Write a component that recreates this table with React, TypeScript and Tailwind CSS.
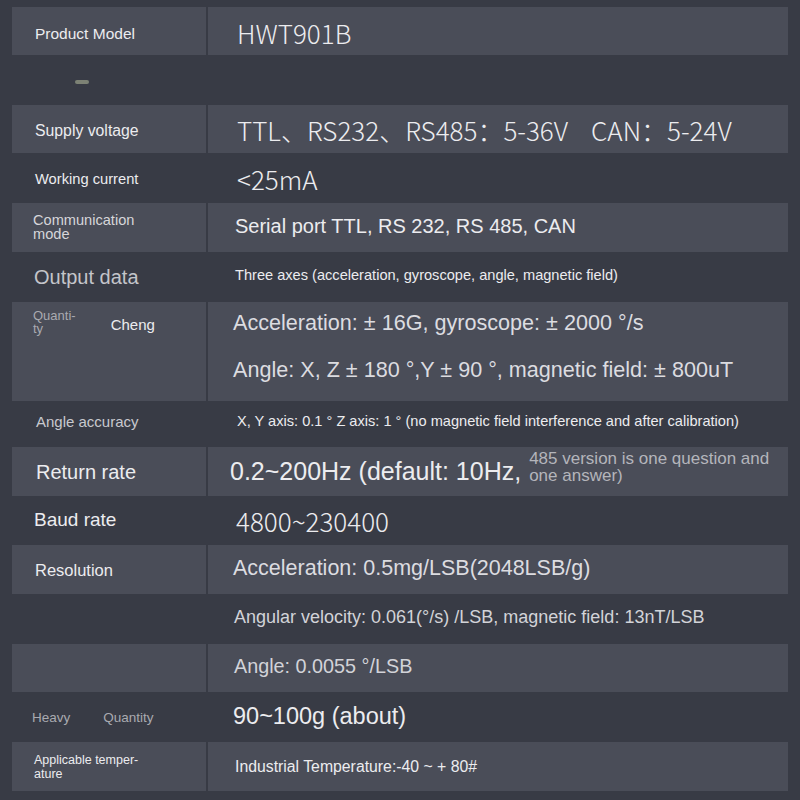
const sans = "font-['Liberation_Sans','Arial',sans-serif]";
const cjk = "font-['Noto_Sans_CJK_SC','Noto_Sans',sans-serif]";

type RowProps = {
  shaded?: boolean;
  h: string;
  left?: React.ReactNode;
  right?: React.ReactNode;
};

function Row({ shaded, h, left, right }: RowProps) {
  return (
    <div className={`flex gap-[2px] ${h}`}>
      <div className={`w-[194px] shrink-0 flex items-center pl-[23px] ${shaded ? "bg-[#4a4d58]" : ""}`}>
        {left}
      </div>
      <div className={`flex-1 flex items-center pl-[27px] ${shaded ? "bg-[#4a4d58]" : ""}`}>
        {right}
      </div>
    </div>
  );
}

export default function App() {
  return (
    <div className={`w-[800px] h-[800px] bg-[#383b45] px-[12px] pt-[7px] text-[#ececef] ${sans}`}>
      <Row
        shaded
        h="h-[48px]"
        left={<span className="text-[15.5px] mt-[5px]">Product Model</span>}
        right={<span className={`${cjk} text-[26px] font-light pl-[2px] mt-[2px]`}>HWT901B</span>}
      />
      <Row
        h="h-[50px]"
        left={<span className="ml-[40px] mt-[4px] w-[14px] h-[4px] rounded-full bg-[#7d8275]" />}
      />
      <Row
        shaded
        h="h-[48px]"
        left={<span className="text-[15.8px] mt-[3px]">Supply voltage</span>}
        right={<span className={`${cjk} text-[26px] font-light pl-[2px] whitespace-pre`}>TTL、RS232、RS485：5-36V    CAN：5-24V</span>}
      />
      <Row
        h="h-[50px]"
        left={<span className="text-[14.7px] mt-[3px]">Working current</span>}
        right={<span className={`${cjk} text-[26px] font-light pl-[2px]`}>&lt;25mA</span>}
      />
      <Row
        shaded
        h="h-[49px]"
        left={<span className="text-[14.6px] leading-[13.5px] text-[#d6d6da] -ml-[2px]">Communication<br />mode</span>}
        right={<span className="text-[20px] -mt-[4px]">Serial port TTL, RS 232, RS 485, CAN</span>}
      />
      <Row
        h="h-[50px]"
        left={<span className="text-[20px] text-[#c4c5ca] -ml-[1px] -mt-[1px]">Output data</span>}
        right={<span className="text-[14.6px] -mt-[3px]">Three axes (acceleration, gyroscope, angle, magnetic field)</span>}
      />
      <div className="flex gap-[2px] h-[99px]">
        <div className="w-[194px] shrink-0 bg-[#4a4d58] pl-[21px] pt-[7px] flex">
          <span className="text-[13px] leading-[13px] text-[#a9aab0]">Quanti-<br />ty</span>
          <span className="text-[15px] ml-[35px] mt-[8px] leading-[15px]">Cheng</span>
        </div>
        <div className="flex-1 bg-[#4a4d58] pl-[25px] flex flex-col text-[21.6px] leading-[26px] text-[#dcdce0]">
          <span className="mt-[8px]">Acceleration: ± 16G, gyroscope: ± 2000 °/s</span>
          <span className="mt-[21px]">Angle: X, Z ± 180 °,Y ± 90 °, magnetic field: ± 800uT</span>
        </div>
      </div>
      <Row
        h="h-[46px]"
        left={<span className="text-[15px] text-[#c8c9ce] ml-[1px] -mt-[4px]">Angle accuracy</span>}
        right={<span className="text-[14.6px] pl-[2px] -mt-[4px]">X, Y axis: 0.1 ° Z axis: 1 ° (no magnetic field interference and after calibration)</span>}
      />
      <Row
        shaded
        h="h-[49px]"
        left={<span className="text-[20px] ml-[1px]">Return rate</span>}
        right={
          <div className="flex items-center -ml-[5px]">
            <span className="text-[25px]">0.2~200Hz (default: 10Hz,</span>
            <span className="text-[17px] leading-[17px] text-[#b4b5bb] ml-[8px] mt-[-10px]">485 version is one question and<br />one answer)</span>
          </div>
        }
      />
      <Row
        h="h-[49px]"
        left={<span className="text-[19px] -ml-[1px]">Baud rate</span>}
        right={<span className={`${cjk} text-[26px] font-light pl-[1px]`}>4800~230400</span>}
      />
      <Row
        shaded
        h="h-[49px]"
        left={<span className="text-[16.5px] mt-[2px]">Resolution</span>}
        right={<span className="text-[21.5px] text-[#dcdce0] -ml-[2px] -mt-[2px]">Acceleration: 0.5mg/LSB(2048LSB/g)</span>}
      />
      <Row
        h="h-[50px]"
        right={<span className="text-[18px] text-[#d2d3d8] -ml-[1px] -mt-[3px]">Angular velocity: 0.061(°/s) /LSB, magnetic field: 13nT/LSB</span>}
      />
      <Row
        shaded
        h="h-[48px]"
        right={<span className="text-[19.8px] text-[#d2d3d8] -ml-[1px] -mt-[2px]">Angle: 0.0055 °/LSB</span>}
      />
      <Row
        h="h-[50px]"
        left={
          <div className="flex text-[13.5px] text-[#a9aab0] -ml-[3px] mt-[2px]">
            <span>Heavy</span>
            <span className="ml-[33px]">Quantity</span>
          </div>
        }
        right={<span className="text-[23.5px] -ml-[2px]">90~100g (about)</span>}
      />
      <Row
        shaded
        h="h-[49px]"
        left={<span className="text-[12.5px] leading-[14px] -ml-[1px]">Applicable temper-<br />ature</span>}
        right={<span className="text-[15.8px]">Industrial Temperature:-40 ~ + 80#</span>}
      />
    </div>
  );
}
